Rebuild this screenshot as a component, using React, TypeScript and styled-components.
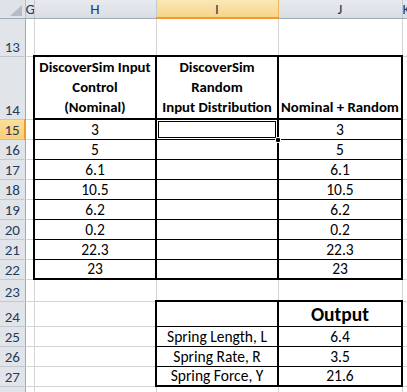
import React from "react";
import styled, { createGlobalStyle, css } from "styled-components";

type Edge = "thick" | "thin" | undefined;

const GRID = "#d4d4d4";
const INK = "#000";

const GlobalStyle = createGlobalStyle`
    html, body {
        margin: 0;
        padding: 0;
        background: #fff;
        overflow: hidden;
    }
`;

const edge = (value: Edge) => {
    if (value === "thick") return `2px solid ${INK}`;
    if (value === "thin") return `1px solid ${INK}`;
    return undefined;
};

const Sheet = styled.table`
    border-collapse: collapse;
    table-layout: fixed;
    width: 407px;
    font-family: Carlito, Calibri, Lato, "Liberation Sans", sans-serif;
    font-size: 15.5px;
    color: #000;
`;

const Row = styled.tr<{ $h: number }>`
    height: ${(p) => p.$h}px;
`;

const Corner = styled.th`
    padding: 0;
    background: #dfe3e8;
    border-right: 1px solid #b8c0ca;
    border-bottom: 1px solid #9eabb9;
    vertical-align: bottom;
    line-height: 0;

    & svg {
        display: block;
        margin: 0 3px 2px auto;
    }
`;

const ColHead = styled.th<{ $active?: boolean }>`
    padding: 0;
    font-weight: 400;
    font-size: 15px;
    line-height: 16px;
    text-align: center;
    vertical-align: middle;
    color: #243b5c;
    background: linear-gradient(#e6e9ee, #dadee4);
    border-right: 1px solid #c3c9d1;
    border-bottom: 1px solid #9eabb9;
    overflow: hidden;
    white-space: nowrap;

    ${(p) =>
        p.$active &&
        css`
            background: linear-gradient(#fbe7b5, #f6d48b);
            border-right: 1px solid #f2b65a;
            border-bottom: 2px solid #f29a2e;
        `}
`;

const RowHead = styled.th<{ $active?: boolean }>`
    padding: 0 0 1px;
    font-weight: 400;
    font-size: 15px;
    line-height: 16px;
    text-align: center;
    vertical-align: bottom;
    color: #243b5c;
    background: #e1e4e9;
    border-right: 1px solid #9eabb9;
    border-bottom: 1px solid #c3c9d1;
    overflow: hidden;

    ${(p) =>
        p.$active &&
        css`
            background: linear-gradient(#fcdf9a, #f8ce74);
            border-right: 2px solid #f29a2e;
            border-bottom: 1px solid #f2b65a;
        `}
`;

const Cell = styled.td<{
    $t?: Edge;
    $b?: Edge;
    $l?: Edge;
    $r?: Edge;
    $bold?: boolean;
    $big?: boolean;
    $lh?: number;
    $active?: boolean;
}>`
    padding: 0 2px 1px;
    text-align: center;
    vertical-align: bottom;
    line-height: ${(p) => p.$lh ?? 16}px;
    white-space: nowrap;
    overflow: visible;
    font-weight: ${(p) => (p.$bold ? 700 : 400)};
    font-size: ${(p) => (p.$big ? "19.5px" : p.$bold ? "14.8px" : "15.5px")};
    border-right: ${(p) => edge(p.$r) ?? `1px solid ${GRID}`};
    border-bottom: ${(p) => edge(p.$b) ?? `1px solid ${GRID}`};
    border-top: ${(p) => edge(p.$t) ?? "none"};
    border-left: ${(p) => edge(p.$l) ?? "none"};
    position: relative;

    ${(p) =>
        p.$active &&
        css`
            box-shadow: inset 0 0 0 1px #fff, inset 0 0 0 2px #000;
        `}
`;

const FillHandle = styled.span`
    position: absolute;
    right: -4px;
    bottom: -4px;
    width: 6px;
    height: 6px;
    background: #000;
    border: 1px solid #fff;
    border-radius: 2px;
    box-sizing: border-box;
    z-index: 2;
`;

const nominal = ["3", "5", "6.1", "10.5", "6.2", "0.2", "22.3", "23"];

const outputs = [
    { label: "Spring Length, L", value: "6.4" },
    { label: "Spring Rate, R", value: "3.5" },
    { label: "Spring Force, Y", value: "21.6" },
];

const App: React.FC = () => {
    return (
        <>
            <GlobalStyle />
            <Sheet>
                <colgroup>
                    <col style={{ width: 25 }} />
                    <col style={{ width: 9 }} />
                    <col style={{ width: 122 }} />
                    <col style={{ width: 122 }} />
                    <col style={{ width: 124 }} />
                    <col style={{ width: 5 }} />
                </colgroup>
                <tbody>
                    <Row $h={18}>
                        <Corner>
                            <svg width="12" height="11" viewBox="0 0 12 11">
                                <polygon points="12,0 12,11 0,11" fill="#b4bcc6" />
                            </svg>
                        </Corner>
                        <ColHead>G</ColHead>
                        <ColHead>H</ColHead>
                        <ColHead $active>I</ColHead>
                        <ColHead>J</ColHead>
                        <ColHead>K</ColHead>
                    </Row>

                    <Row $h={38}>
                        <RowHead>13</RowHead>
                        <Cell />
                        <Cell $b="thick" />
                        <Cell $b="thick" />
                        <Cell $b="thick" />
                        <Cell />
                    </Row>

                    <Row $h={62}>
                        <RowHead>14</RowHead>
                        <Cell />
                        <Cell $bold $lh={20} $l="thick" $r="thick" $b="thick">
                            DiscoverSim Input
                            <br />
                            Control
                            <br />
                            (Nominal)
                        </Cell>
                        <Cell $bold $lh={20} $r="thick" $b="thick">
                            DiscoverSim
                            <br />
                            Random
                            <br />
                            Input Distribution
                        </Cell>
                        <Cell $bold $lh={20} $r="thick" $b="thick">
                            Nominal + Random
                        </Cell>
                        <Cell />
                    </Row>

                    {nominal.map((value, i) => {
                        const last = i === nominal.length - 1;
                        const bottom: Edge = last ? "thick" : "thin";
                        return (
                            <Row $h={20} key={value + i}>
                                <RowHead $active={i === 0}>{15 + i}</RowHead>
                                <Cell />
                                <Cell $l="thick" $r="thick" $b={bottom}>
                                    {value}
                                </Cell>
                                <Cell $r="thick" $b={bottom} $active={i === 0}>
                                    {i === 0 && <FillHandle />}
                                </Cell>
                                <Cell $r="thick" $b={bottom}>
                                    {value}
                                </Cell>
                                <Cell />
                            </Row>
                        );
                    })}

                    <Row $h={22}>
                        <RowHead>23</RowHead>
                        <Cell />
                        <Cell />
                        <Cell $b="thick" />
                        <Cell $b="thick" />
                        <Cell />
                    </Row>

                    <Row $h={25}>
                        <RowHead>24</RowHead>
                        <Cell />
                        <Cell />
                        <Cell $l="thick" $r="thick" $b="thin" />
                        <Cell $bold $big $lh={22} $r="thick" $b="thin">
                            Output
                        </Cell>
                        <Cell />
                    </Row>

                    {outputs.map((o, i) => {
                        const bottom: Edge = i === outputs.length - 1 ? "thick" : "thin";
                        return (
                            <Row $h={20} key={o.label}>
                                <RowHead>{25 + i}</RowHead>
                                <Cell />
                                <Cell />
                                <Cell $l="thick" $r="thick" $b={bottom}>
                                    {o.label}
                                </Cell>
                                <Cell $r="thick" $b={bottom}>
                                    {o.value}
                                </Cell>
                                <Cell />
                            </Row>
                        );
                    })}

                    <Row $h={20}>
                        <RowHead />
                        <Cell />
                        <Cell />
                        <Cell />
                        <Cell />
                        <Cell />
                    </Row>
                </tbody>
            </Sheet>
        </>
    );
};

export default App;
